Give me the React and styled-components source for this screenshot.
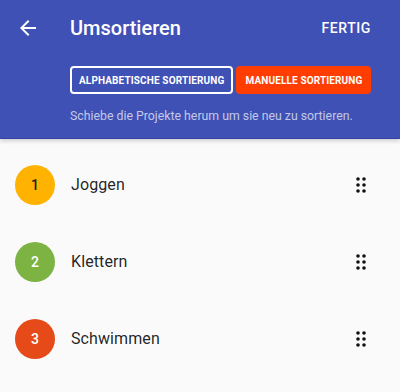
import React from 'react'
import styled, { createGlobalStyle } from 'styled-components'

const GlobalStyle = createGlobalStyle`
  html, body {
    margin: 0;
    padding: 0;
    background: #fafafa;
    font-family: Roboto, "Liberation Sans", sans-serif;
  }
`

const Page = styled.div`
  width: 400px;
  height: 392px;
  overflow: hidden;
  background: #fafafa;
`

const Header = styled.header`
  background-color: #3f51b5;
  height: 138px;
  border-bottom: 1px solid #3343a6;
  box-shadow: 0 2px 4px rgba(0, 0, 0, 0.18);
  position: relative;
  z-index: 1;
`

const Toolbar = styled.div`
  display: flex;
  align-items: center;
  height: 56px;
  padding: 0 29px 0 16px;
`

const BackButton = styled.div`
  width: 24px;
  height: 24px;
  color: #fff;
  display: flex;
  margin-right: 30px;
  margin-top: -1px;
`

const Title = styled.h1`
  flex: 1;
  margin: 0;
  color: #fff;
  font-size: 20px;
  font-weight: 500;
  line-height: 56px;
`

const Done = styled.div`
  color: #fff;
  font-size: 14px;
  font-weight: 500;
  letter-spacing: 0.6px;
`

const Controls = styled.div`
  padding: 10px 0 0 70px;
`

const ButtonRow = styled.div`
  display: flex;
  gap: 3px;
`

const SortButton = styled.div`
  height: 28px;
  box-sizing: border-box;
  padding: 0 7px;
  display: flex;
  align-items: center;
  border-radius: 4px;
  font-size: 10px;
  font-weight: 700;
  letter-spacing: 0.13px;
  color: #fff;
  border: 2px solid ${({ active }) => (active ? '#ff3d00' : '#fff')};
  background: ${({ active }) => (active ? '#ff3d00' : 'transparent')};
`

const Hint = styled.p`
  margin: 15px 0 0;
  font-size: 12.3px;
  color: rgba(255, 255, 255, 0.7);
`

const List = styled.ul`
  list-style: none;
  margin: 0;
  padding: 7px 0 0;
`

const Row = styled.li`
  display: flex;
  align-items: center;
  height: 77px;
  padding: 0 27px 0 15px;
`

const Badge = styled.div`
  width: 40px;
  height: 40px;
  border-radius: 50%;
  background: ${({ color }) => color};
  color: ${({ dark }) => (dark ? '#212121' : '#fff')};
  display: flex;
  align-items: center;
  justify-content: center;
  font-size: 14px;
  font-weight: 500;
`

const Name = styled.span`
  flex: 1;
  margin-left: 16px;
  font-size: 16px;
  letter-spacing: 0.1px;
  color: rgba(0, 0, 0, 0.87);
`

const Handle = styled.div`
  width: 24px;
  height: 24px;
  display: flex;
  color: #111;
`

const ArrowBack = () => (
  <svg width="24" height="24" viewBox="0 0 24 24" fill="currentColor">
    <path d="M20 11H7.83l5.59-5.59L12 4l-8 8 8 8 1.41-1.41L7.83 13H20v-2z" />
  </svg>
)

const DragIndicator = () => (
  <svg width="24" height="24" viewBox="0 0 24 24" fill="currentColor">
    {[9, 15].map((x) =>
      [6, 12, 18].map((y) => <circle key={`${x}-${y}`} cx={x} cy={y} r="1.8" />)
    )}
  </svg>
)

const projects = [
  { id: 1, name: 'Joggen', color: '#ffb300', dark: true },
  { id: 2, name: 'Klettern', color: '#7cb342' },
  { id: 3, name: 'Schwimmen', color: '#e64a19' },
]

const App = () => {
  return (
    <Page>
      <GlobalStyle />
      <Header>
        <Toolbar>
          <BackButton>
            <ArrowBack />
          </BackButton>
          <Title>Umsortieren</Title>
          <Done>FERTIG</Done>
        </Toolbar>
        <Controls>
          <ButtonRow>
            <SortButton>ALPHABETISCHE SORTIERUNG</SortButton>
            <SortButton active>MANUELLE SORTIERUNG</SortButton>
          </ButtonRow>
          <Hint>Schiebe die Projekte herum um sie neu zu sortieren.</Hint>
        </Controls>
      </Header>
      <List>
        {projects.map((p) => (
          <Row key={p.id}>
            <Badge color={p.color} dark={p.dark}>{p.id}</Badge>
            <Name>{p.name}</Name>
            <Handle>
              <DragIndicator />
            </Handle>
          </Row>
        ))}
      </List>
    </Page>
  )
}

export default App
